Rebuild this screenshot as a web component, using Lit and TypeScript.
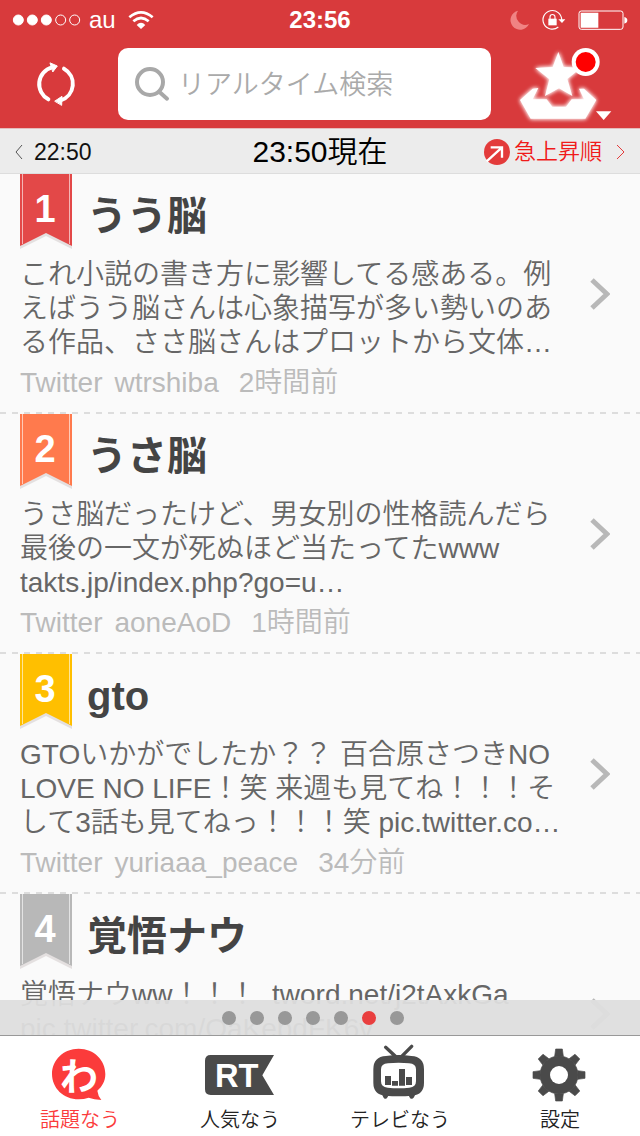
import { LitElement, html, css, svg } from "lit";
import { customElement, property, state } from "lit/decorators.js";
import { classMap } from "lit/directives/class-map.js";

interface Topic {
  title: string;
  tone: string;
  lines: string[];
  source: string[];
}

const TOPICS: Topic[] = [
  {
    title: "うう脳",
    tone: "red",
    lines: ["これ小説の書き方に影響してる感ある。例", "えばうう脳さんは心象描写が多い勢いのあ", "る作品、ささ脳さんはプロットから文体…"],
    source: ["Twitter", "wtrshiba", "2時間前"],
  },
  {
    title: "うさ脳",
    tone: "orange",
    lines: ["うさ脳だったけど、男女別の性格読んだら", "最後の一文が死ぬほど当たってたwww", "takts.jp/index.php?go=u…"],
    source: ["Twitter", "aoneAoD", "1時間前"],
  },
  {
    title: "gto",
    tone: "yellow",
    lines: ["GTOいかがでしたか？？ 百合原さつきNO", "LOVE NO LIFE！笑 来週も見てね！！！そ", "して3話も見てねっ！！！笑 pic.twitter.co…"],
    source: ["Twitter", "yuriaaa_peace", "34分前"],
  },
  {
    title: "覚悟ナウ",
    tone: "gray",
    lines: ["覚悟ナウww！！！  tword.net/j2tAxkGa", "pic.twitter.com/OaKebdFK6v"],
    source: [],
  },
];

@customElement("status-bar")
class StatusBar extends LitElement {
  static styles = css`
    :host {
      display: grid;
      grid-template-columns: 1fr auto 1fr;
      align-items: center;
      height: 40px;
      padding: 0 12px;
      color: #fff;
      font-size: 24px;
      line-height: 28px;
    }
    .side {
      display: flex;
      align-items: center;
      gap: 8px;
    }
    .end {
      justify-content: flex-end;
      gap: 12px;
    }
    .clock {
      font-weight: 700;
    }
    svg {
      display: block;
    }
    .wifi {
      margin-left: 4px;
    }
  `;

  render() {
    return html`
      <div class="side">
        <svg width="69" height="14" viewBox="36 41 207 42" fill="#fff" stroke="#fff" stroke-width="3">
          <circle cx="55" cy="62" r="15" /><circle cx="97" cy="62" r="15" /><circle cx="139" cy="62" r="15" />
          <circle cx="182" cy="62" r="15" fill="none" /><circle cx="224" cy="62" r="15" fill="none" />
        </svg>
        <span>au</span>
        <svg class="wifi" width="26" height="20" viewBox="377 30 78 60" fill="none" stroke="#fff" stroke-width="8">
          <path d="M381 52Q416 22 451 52M393 64Q416 44 439 64" />
          <path d="M403 75Q416 62 429 75L416 87Z" fill="#fff" stroke="none" />
        </svg>
      </div>
      <div class="clock">23:56</div>
      <div class="side end">
        <svg width="20" height="20" viewBox="580 30 60 60">
          <path fill="#f08383" d="M604 32A29 29 0 1 0 637 72A27 27 0 0 1 604 32Z" />
        </svg>
        <svg width="24" height="22" viewBox="673 27 72 66" fill="none" stroke="#fff" stroke-width="3.5">
          <path d="M732 60A28 28 0 1 0 722 81" />
          <path d="M722 58H743L733 69Z" fill="#fff" stroke="none" />
          <path d="M692 56H717V76H692Z" fill="#fff" stroke="none" />
          <path d="M697 57V51A7.500 7.500 0 0 1 712 51V57" />
        </svg>
        <svg width="50" height="20" viewBox="779 31 150 60">
          <rect x="782" y="34" width="132" height="55" rx="7" fill="none" stroke="#fff" stroke-width="3" />
          <path fill="#fff" d="M787 39H840V84H787ZM918 52Q927 54 927 62T918 72Z" />
        </svg>
      </div>
    `;
  }
}

@customElement("search-header")
class SearchHeader extends LitElement {
  static styles = css`
    :host {
      display: grid;
      grid-template-columns: 118px minmax(0, 1fr) 149px;
      align-items: start;
      height: 88px;
      padding-top: 8px;
      box-sizing: border-box;
    }
    button {
      display: flex;
      align-items: center;
      height: 72px;
      padding: 0;
      border: 0;
      background: none;
    }
    .reload {
      padding-left: 35px;
    }
    .fav {
      padding-left: 25px;
    }
    svg {
      display: block;
      flex: none;
      overflow: visible;
    }
    .glow {
      filter: drop-shadow(0 0 6px #fff) drop-shadow(0 0 4px #fff8);
    }
    .box {
      display: flex;
      align-items: center;
      gap: 8px;
      height: 72px;
      padding: 0 16px;
      box-sizing: border-box;
      border-radius: 10px;
      background: #fff;
    }
    input {
      flex: 1;
      min-width: 0;
      height: 72px;
      padding: 2px 0 0;
      box-sizing: border-box;
      border: 0;
      outline: 0;
      background: none;
      color: #444;
      font: inherit;
      font-size: 27px;
      font-weight: 350;
    }
    input::placeholder {
      color: #aaa;
      opacity: 1;
    }
  `;

  render() {
    return html`
      <button class="reload" aria-label="更新">
        <svg width="42" height="46" viewBox="104 186 126 138" fill="none" stroke="#fff" stroke-width="12" stroke-linecap="round">
          <path d="M144 301A52 52 0 0 1 155 205M191 209A52 52 0 0 1 181 304" />
          <path d="M150 192L171 201L158 218ZM164 306L185 292L184 318Z" fill="#fff" stroke-width="3" stroke-linejoin="round" />
        </svg>
      </button>
      <label class="box">
        <svg width="36" height="36" viewBox="402 198 108 108" fill="none" stroke="#a8a8a8" stroke-width="12" stroke-linecap="round">
          <circle cx="450" cy="246" r="39" /><path d="M481 278L501 296" />
        </svg>
        <input type="search" placeholder="リアルタイム検索" aria-label="リアルタイム検索" />
      </label>
      <button class="fav" aria-label="お気に入り">
        <svg width="97" height="75" viewBox="588 135 291 225" fill="#fff">
          <g class="glow">
            <path d="M715 150L731 195L784 197L742 231L757 282L717 259L675 282L688 232L646 198L698 195Z" />
            <path d="M600 294L638 260L655 258L638 292H680L697 314H738L755 292H792L777 260H792L829 294L796 350H632Z" />
          </g>
          <circle cx="797" cy="180" r="42" /><circle cx="797" cy="180" r="30" fill="#f00" />
          <path d="M828 328H874L851 354Z" />
        </svg>
      </button>
    `;
  }
}

@customElement("time-bar")
class TimeBar extends LitElement {
  static styles = css`
    :host {
      display: grid;
      grid-template-columns: 1fr auto 1fr;
      align-items: center;
      height: 46px;
      padding: 2px 14px 0;
      box-sizing: border-box;
      border-top: 1px solid #e4bcbc;
      border-bottom: 1px solid #ddd;
      background: #ececec;
      color: #111;
    }
    a {
      display: flex;
      align-items: center;
      color: inherit;
      font-size: 23px;
      line-height: 30px;
      text-decoration: none;
    }
    .prev {
      gap: 11px;
    }
    .rise {
      justify-content: flex-end;
      gap: 4px;
      color: #f01a1a;
      font-size: 22px;
      font-weight: 350;
    }
    .more {
      margin-left: 8px;
    }
    h1 {
      margin: 0;
      color: #000;
      font-size: 30px;
      font-weight: 350;
      line-height: 40px;
    }
    svg {
      display: block;
    }
  `;

  render() {
    return html`
      <a class="prev" href="#prev">
        <svg width="9" height="18" viewBox="0 0 9 18" fill="none" stroke="#555"><path d="M8 2L2 9L8 16" /></svg>
        22:50
      </a>
      <h1>23:50現在</h1>
      <a class="rise" href="#rise">
        <svg width="26" height="26" viewBox="492 54 78 78">
          <circle cx="531" cy="93" r="39" fill="#e33b3b" />
          <path d="M500 121L546 79M512 79H546V110" fill="none" stroke="#fff" stroke-width="7" />
        </svg>
        急上昇順
        <svg class="more" width="12" height="18" viewBox="0 0 12 18" fill="none" stroke="#e33b3b">
          <path d="M3 2L10 9L3 16" />
        </svg>
      </a>
    `;
  }
}

@customElement("topic-row")
class TopicRow extends LitElement {
  @property({ attribute: false }) topic!: Topic;
  @property({ type: Number }) rank = 0;

  static styles = css`
    :host {
      display: block;
      flex: none;
    }
    .row {
      display: grid;
      grid-template-columns: 1fr 20px;
      align-items: center;
      height: 240px;
      padding: 0 30px 0 20px;
      box-sizing: border-box;
      color: inherit;
      text-decoration: none;
      background: repeating-linear-gradient(90deg, #ddd 0 6px, transparent 6px 12px) left bottom / 100% 2px no-repeat;
    }
    .main {
      align-self: start;
      min-width: 0;
    }
    .head {
      display: flex;
      gap: 15px;
      height: 84px;
    }
    .ribbon {
      display: block;
      flex: none;
    }
    .red {
      fill: #e34848;
    }
    .orange {
      fill: #ff7a4d;
    }
    .yellow {
      fill: #ffbf00;
    }
    .gray {
      fill: #b8b8b8;
    }
    h2 {
      margin: 0;
      padding-top: 16px;
      color: #444;
      font-size: 40px;
      font-weight: 700;
      line-height: 52px;
    }
    .text {
      margin: 0;
      color: #666;
      font-size: 28px;
      font-weight: 350;
      line-height: 34px;
      white-space: pre;
    }
    .line {
      display: block;
      height: 34px;
    }
    .meta {
      display: flex;
      gap: 12px;
      margin: 6px 0 0;
      color: #bbb;
      font-size: 28px;
      font-weight: 350;
      line-height: 34px;
      white-space: nowrap;
    }
    .when {
      padding-left: 8px;
    }
  `;

  render() {
    const t = this.topic;
    return html`
      <a class="row" href="#topic-${this.rank}">
        <div class="main">
          <div class="head">
            <svg class="ribbon" width="52" height="76" viewBox="0 0 52 76">
              <path d="M0 4H52V75L26 62L0 75Z" fill="#e4e0e0" />
              <path class=${t.tone} d="M0 0H52V72L26 59L0 72Z" />
              <path d="M2.500 0V70M49.500 0V70" stroke="#fff" stroke-opacity=".6" />
              <text x="25" y="48" text-anchor="middle" fill="#fff" font-size="38" font-weight="700">${this.rank}</text>
            </svg>
            <h2>${t.title}</h2>
          </div>
          <p class="text">${t.lines.map((l) => html`<span class="line">${l}</span>`)}</p>
          <p class="meta">
            ${t.source.map((s, i) => html`<span class=${classMap({ when: i === 2 })}>${s}</span>`)}
          </p>
        </div>
        <svg width="20" height="32" viewBox="0 0 20 32" fill="none" stroke="#b8b8b8" stroke-width="5">
          <path d="M2 2L17 16L2 30" />
        </svg>
      </a>
    `;
  }
}

const TOOTH = "M-13 -56L-10 -78H10L13 -56Z";

const TABS = [
  {
    label: "話題なう",
    box: "120 192 240 174",
    art: svg`
      <path d="M236 206C282 206 316 240 316 282C316 304 306 320 292 332Q294 348 304 360Q282 358 266 353Q252 358 236 358C190 358 156 324 156 282S190 206 236 206Z" fill="#fb3b3b"/>
      <text x="237" y="329" text-anchor="middle" font-size="114" font-weight="700" fill="#fff">わ</text>`,
  },
  {
    label: "人気なう",
    box: "600 192 240 174",
    art: svg`
      <path d="M632 225H822L787 286L822 345H632Q615 345 615 328V242Q615 225 632 225Z"/>
      <text x="710" y="321" text-anchor="middle" font-size="98" font-weight="700" fill="#fff">RT</text>`,
  },
  {
    label: "テレビなう",
    box: "120 192 240 174",
    art: svg`
      <path d="M197 202L236 238L275 199" fill="none" stroke="#4a4a4a" stroke-width="10" stroke-linecap="round"/>
      <path d="M198 228Q236 222 274 228Q312 230 312 268V308Q312 344 276 347Q236 351 196 347Q160 344 160 308V268Q160 230 198 228Z"/>
      <path d="M186 343H208L201 354Q194 360 190 352ZM264 343H286L282 352Q276 360 270 354Z"/>
      <path d="M204 250Q236 246 267 250Q288 251 288 268V304Q288 322 268 323Q236 327 203 323Q183 322 183 304V268Q183 251 204 250Z" fill="#fff"/>
      <path d="M195 288H213V315H195ZM216 303H234V317H216ZM237 267H255V317H237ZM258 291H276V315H258Z"/>`,
  },
  {
    label: "設定",
    box: "600 192 240 174",
    art: svg`
      <g transform="translate(717 285)" stroke="#4a4a4a" stroke-width="2" stroke-linejoin="round">
        <circle r="57"/>
        ${[0, 45, 90, 135, 180, 225, 270, 315].map((a) => svg`<path d=${TOOTH} transform="rotate(${a})"/>`)}
        <circle r="27" fill="#fff" stroke="none"/>
      </g>`,
  },
];

@customElement("tab-bar")
class TabBar extends LitElement {
  @state() private current = 0;

  static styles = css`
    :host {
      display: grid;
      grid-template-columns: repeat(4, 1fr);
      height: 101px;
      padding-top: 8px;
      box-sizing: border-box;
      border-top: 1px solid #999;
      background: #fff;
    }
    button {
      display: flex;
      flex-direction: column;
      align-items: center;
      gap: 3px;
      padding: 0;
      border: 0;
      background: none;
      color: #222;
      font: inherit;
      font-size: 20px;
      font-weight: 350;
      line-height: 30px;
    }
    .on {
      color: #fb3b3b;
    }
    svg {
      display: block;
      fill: #4a4a4a;
    }
  `;

  render() {
    return TABS.map(
      (t, i) => html`
        <button class=${classMap({ on: i === this.current })} @click=${() => (this.current = i)}>
          <svg width="80" height="58" viewBox=${t.box}>${t.art}</svg>
          ${t.label}
        </button>
      `
    );
  }
}

@customElement("app-root")
class AppRoot extends LitElement {
  @state() private page = 5;

  static styles = css`
    :host {
      display: flex;
      flex-direction: column;
      height: 100vh;
      overflow: hidden;
      background: #fafafa;
      font-family: "Liberation Sans", "Noto Sans CJK JP", sans-serif;
    }
    .top {
      flex: none;
      background: #d83a3c;
    }
    .list {
      position: relative;
      display: flex;
      flex-direction: column;
      flex: 1;
      min-height: 0;
      overflow: hidden;
    }
    .pager {
      position: absolute;
      inset: auto 0 0;
      display: flex;
      align-items: center;
      justify-content: center;
      gap: 14px;
      height: 35px;
      padding-right: 14px;
      background: rgba(222, 222, 222, 0.95);
    }
    .dot {
      width: 14px;
      height: 14px;
      padding: 0;
      border: 0;
      border-radius: 50%;
      background: #989898;
    }
    .here {
      background: #e93f3f;
    }
  `;

  render() {
    return html`
      <header class="top">
        <status-bar></status-bar>
        <search-header></search-header>
      </header>
      <time-bar></time-bar>
      <main class="list">
        ${TOPICS.map((t, i) => html`<topic-row .topic=${t} .rank=${i + 1}></topic-row>`)}
        <div class="pager">
          ${[0, 1, 2, 3, 4, 5, 6].map(
            (i) => html`<button
              class=${classMap({ dot: true, here: i === this.page })}
              aria-label="${i + 1}ページ"
              @click=${() => (this.page = i)}
            ></button>`
          )}
        </div>
      </main>
      <tab-bar></tab-bar>
    `;
  }
}
